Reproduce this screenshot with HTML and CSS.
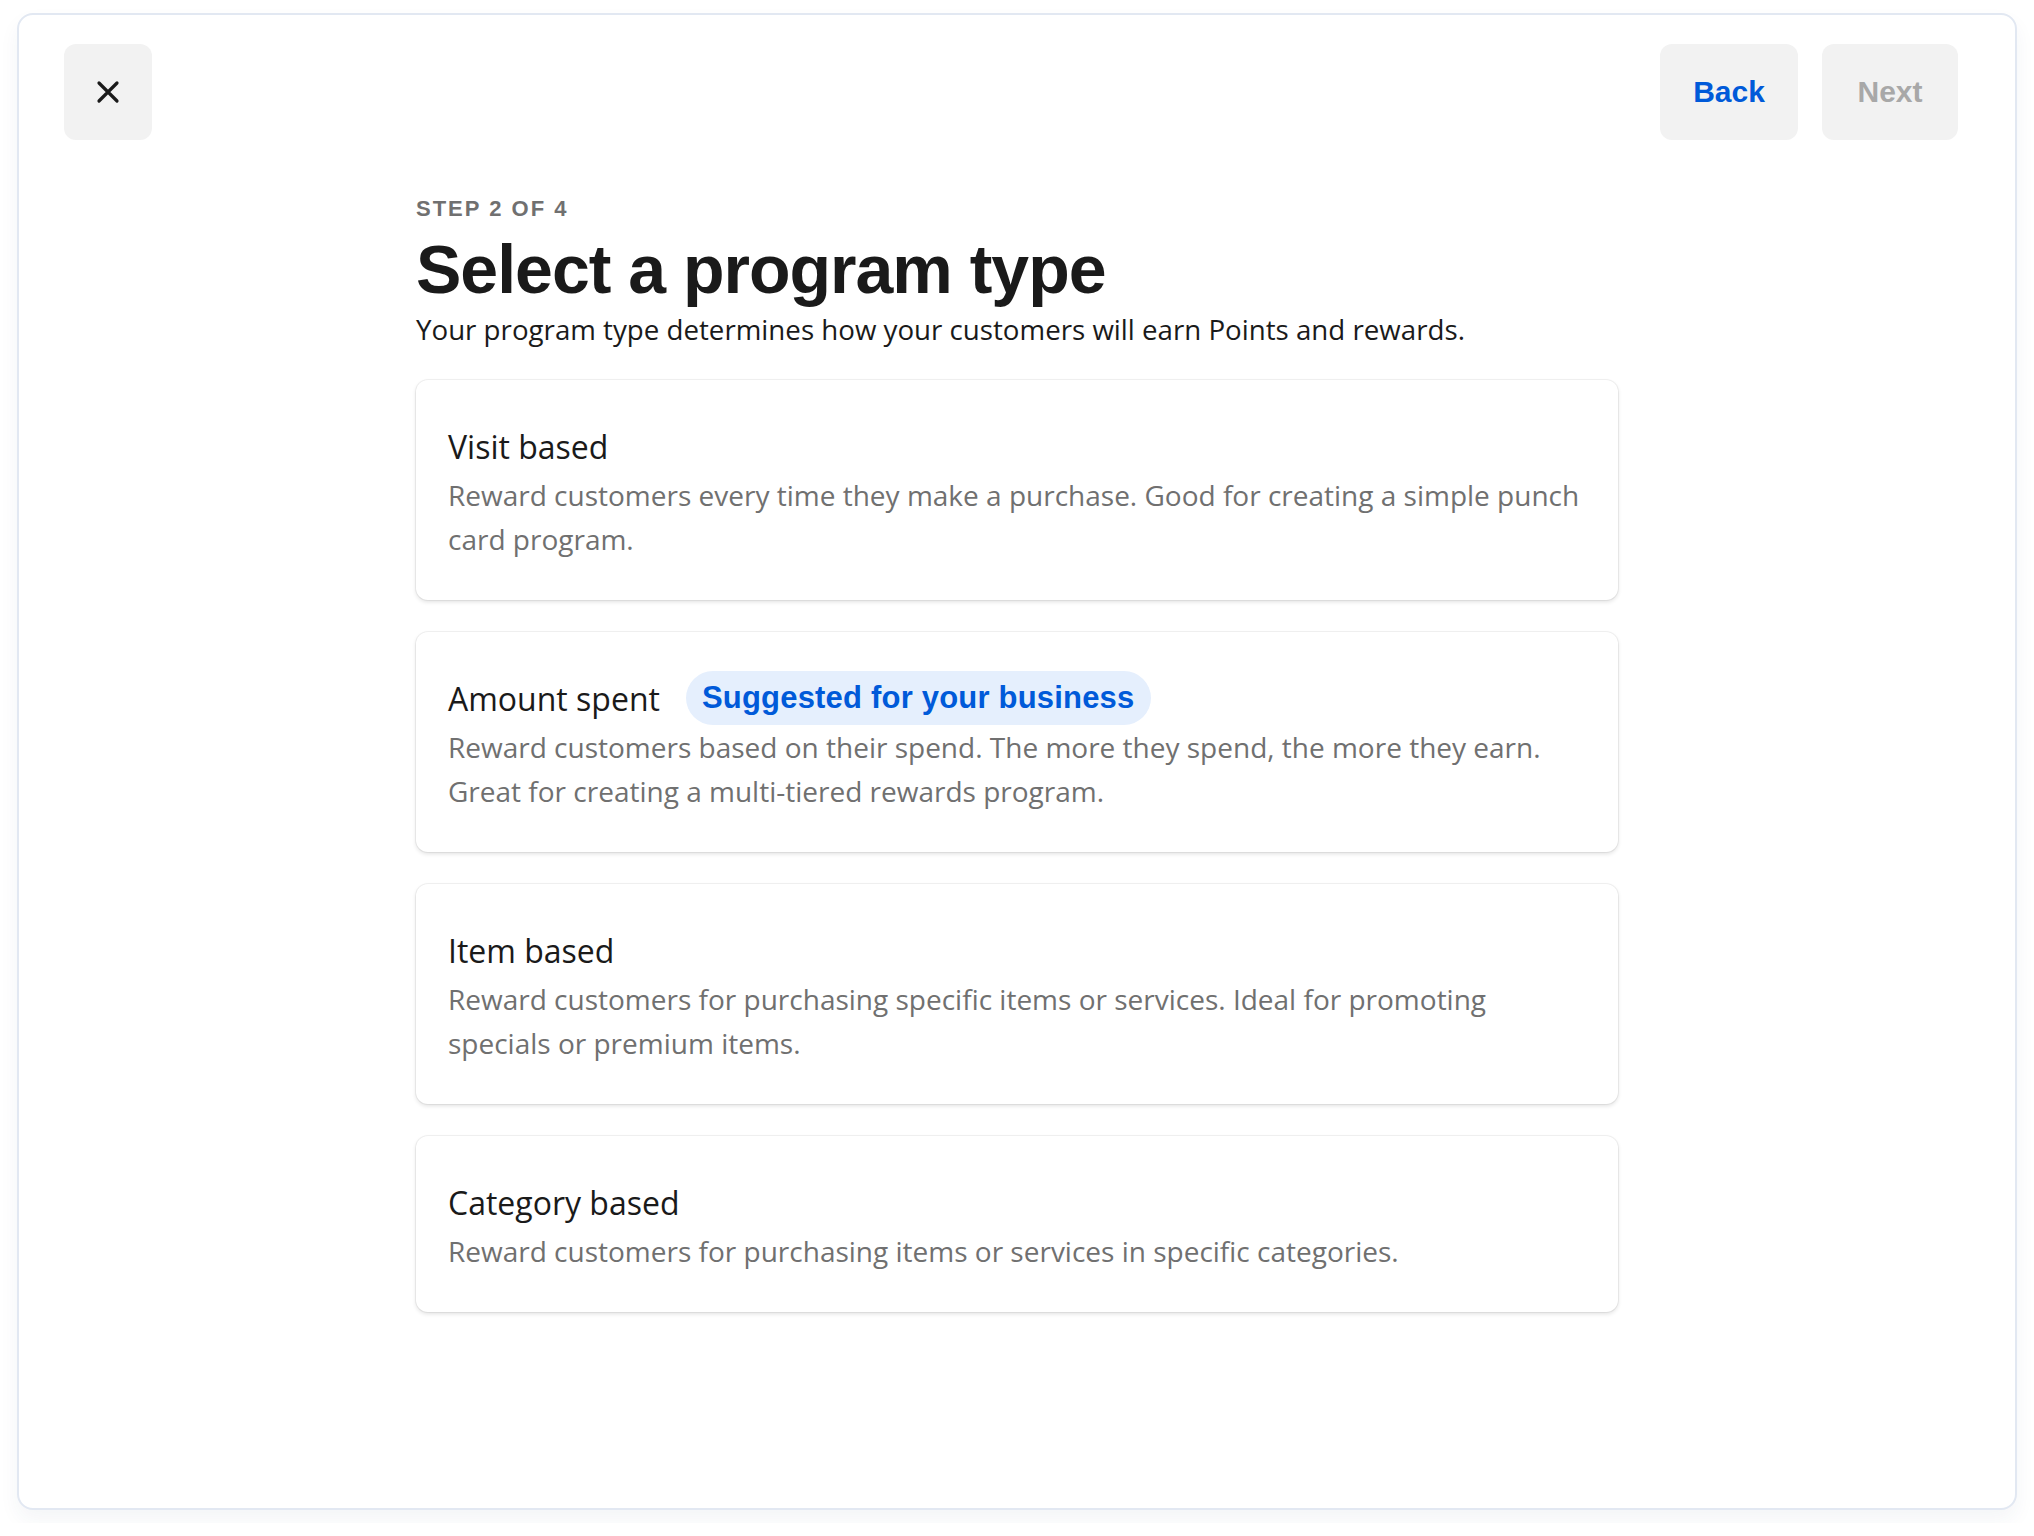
FILE: index.html
```html
<!DOCTYPE html>
<html lang="en">
<head>
  <meta charset="UTF-8">
  <title>Select a program type</title>
  <link rel="stylesheet" href="styles.css">
</head>
<body>
  <div class="frame">
    <div class="topbar">
      <button class="btn btn-close" aria-label="Close">
        <svg width="24" height="24" viewBox="0 0 24 24">
          <path d="M3 3 L21 21 M21 3 L3 21" stroke="#1a1a1a" stroke-width="3.2" stroke-linecap="round" fill="none"/>
        </svg>
      </button>
      <div class="nav">
        <button class="btn btn-back">Back</button>
        <button class="btn btn-next" disabled>Next</button>
      </div>
    </div>

    <div class="main">
      <div class="step">STEP 2 OF 4</div>
      <h1>Select a program type</h1>
      <p class="lead">Your program type determines how your customers will earn Points and rewards.</p>

      <div class="options">
        <div class="option">
          <div class="option-head"><span class="option-title">Visit based</span></div>
          <p class="option-desc">Reward customers every time they make a purchase. Good for creating a simple punch card program.</p>
        </div>
        <div class="option">
          <div class="option-head">
            <span class="option-title">Amount spent</span>
            <span class="badge">Suggested for your business</span>
          </div>
          <p class="option-desc">Reward customers based on their spend. The more they spend, the more they earn. Great for creating a multi-tiered rewards program.</p>
        </div>
        <div class="option">
          <div class="option-head"><span class="option-title">Item based</span></div>
          <p class="option-desc">Reward customers for purchasing specific items or services. Ideal for promoting specials or premium items.</p>
        </div>
        <div class="option">
          <div class="option-head"><span class="option-title">Category based</span></div>
          <p class="option-desc">Reward customers for purchasing items or services in specific categories.</p>
        </div>
      </div>
    </div>
  </div>
</body>
</html>
```
FILE: styles.css
```css
body {
  margin: 0;
  font-family: 'Liberation Sans', Arial, sans-serif;
  background-color: #ffffff;
  color: #1a1a1a;
}

.frame {
  box-sizing: border-box;
  margin: 13px 17px;
  height: 1497px;
  border: 2px solid #e2e8f2;
  border-radius: 16px;
  box-shadow: 0 10px 20px rgba(40, 60, 100, 0.05);
  background-color: #ffffff;
}

.topbar {
  display: flex;
  justify-content: space-between;
  padding: 29px 57px 0 45px;
}

.nav {
  display: flex;
  gap: 24px;
}

.btn {
  height: 96px;
  border: none;
  border-radius: 12px;
  background-color: #f2f2f2;
  font-family: inherit;
  font-size: 30px;
  font-weight: bold;
  cursor: pointer;
}

.btn-close {
  width: 88px;
  display: flex;
  align-items: center;
  justify-content: center;
  padding: 0;
}

.btn-back {
  width: 138px;
  color: #005ad9;
}

.btn-next {
  width: 136px;
  color: #a8a8a8;
  cursor: default;
}

.main {
  width: 1202px;
  margin: 0 auto;
}

.step {
  margin-top: 55px;
  font-size: 22px;
  line-height: 28px;
  font-weight: bold;
  letter-spacing: 2px;
  color: #707070;
}

h1 {
  margin: 8px 0 0;
  font-size: 68px;
  line-height: 76px;
  letter-spacing: -1px;
  font-weight: bold;
  color: #1a1a1a;
}

.lead {
  margin: 4px 0 0;
  font-family: 'Open Sans', sans-serif;
  font-size: 27.7px;
  line-height: 36px;
}

.options {
  display: flex;
  flex-direction: column;
  gap: 32px;
  margin-top: 33px;
}

.option {
  padding: 39px 32px;
  border-radius: 12px;
  background-color: #ffffff;
  box-shadow: 0 0 0 1px rgba(0, 0, 0, 0.05), 0 2px 4px rgba(0, 0, 0, 0.12);
  cursor: pointer;
}

.option-head {
  display: flex;
  align-items: center;
  gap: 26px;
  min-height: 54px;
}

.option-title {
  font-family: 'Open Sans', sans-serif;
  font-size: 32px;
  color: #1a1a1a;
}

.badge {
  display: inline-flex;
  align-items: center;
  height: 54px;
  padding: 0 16px;
  border-radius: 27px;
  background-color: #e5effd;
  color: #005ad9;
  font-size: 31px;
  font-weight: bold;
  letter-spacing: 0.2px;
}

.option-desc {
  margin: 0;
  font-family: 'Open Sans', sans-serif;
  font-size: 28px;
  line-height: 44px;
  color: #707070;
}
```
